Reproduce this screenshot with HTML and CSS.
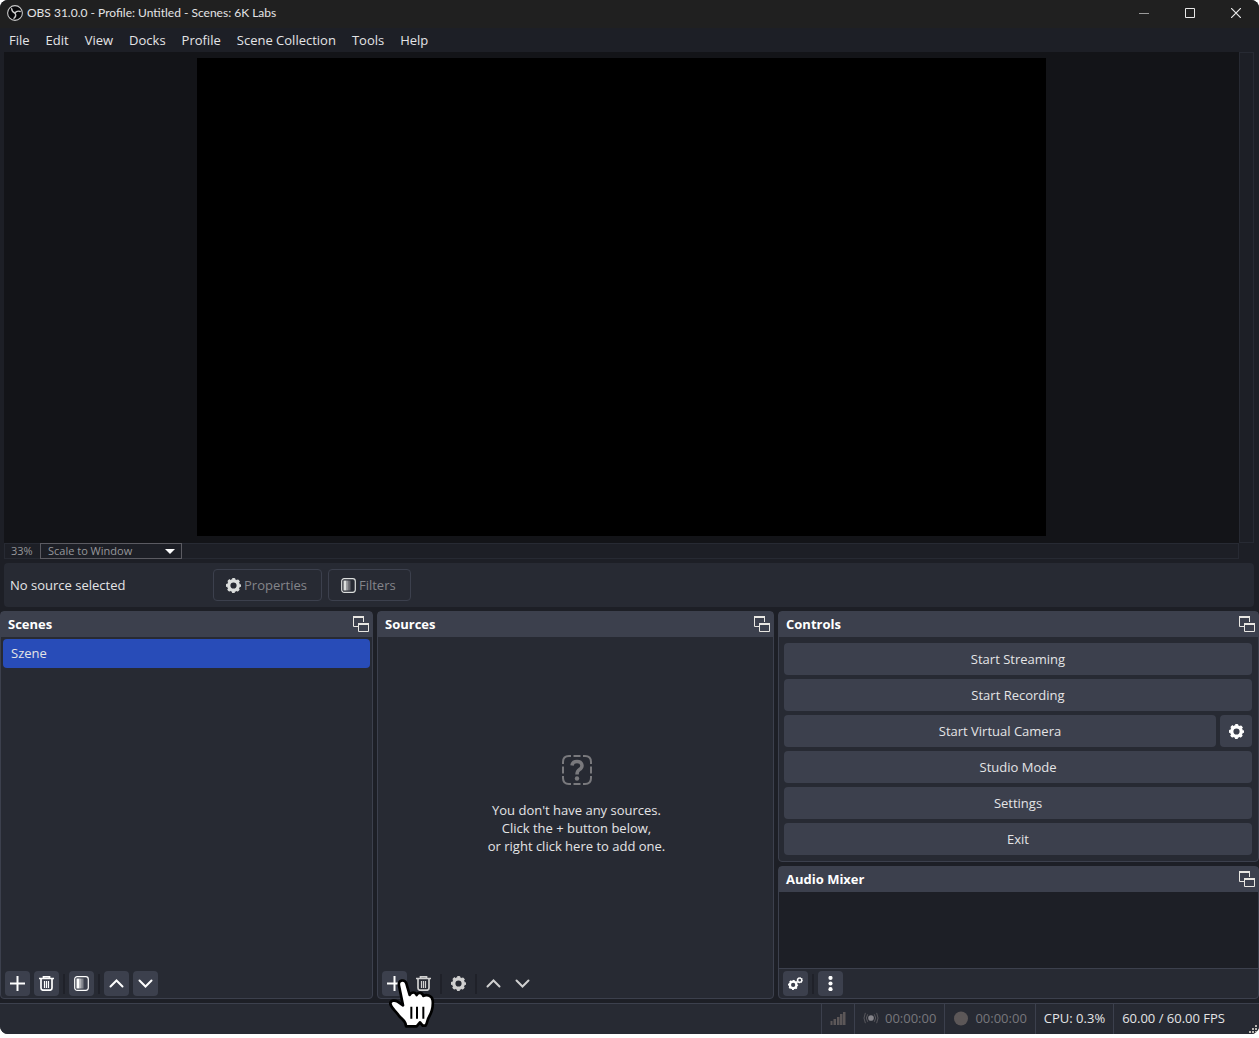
FILE: index.html
```html
<!DOCTYPE html>
<html lang="en">
<head>
<meta charset="utf-8">
<title>OBS 31.0.0 - Profile: Untitled - Scenes: 6K Labs</title>
<link rel="stylesheet" href="styles.css">
</head>
<body>
<svg class="symbols" aria-hidden="true">
  <symbol id="gear" viewBox="0 0 16 16">
    <circle cx="8" cy="8" r="5.100" fill="none" stroke="currentColor" stroke-width="3.600"/>
    <circle cx="8" cy="8" r="7" fill="none" stroke="currentColor" stroke-width="2" stroke-dasharray="3 2.498" stroke-dashoffset="1.500"/>
  </symbol>
  <symbol id="popout" viewBox="0 0 16 16">
    <path d="M5 10.500H.5V.5h10V6" fill="none" stroke="currentColor"/>
    <path d="M0 0h11v2H0z" fill="currentColor"/>
    <path d="M5.500 7.500h10v8h-10z" fill="none" stroke="currentColor"/>
    <path d="M5 7h11v2H5z" fill="currentColor"/>
  </symbol>
  <symbol id="plus" viewBox="0 0 15 15"><path d="M7.500 0v15M0 7.500h15" fill="none" stroke="currentColor" stroke-width="2"/></symbol>
  <symbol id="trash" viewBox="0 0 15 15">
    <path d="M0 2.500h15M4.500 2V.6h6V2M2 3v9q0 2.200 2.200 2.200h6.600Q13 14.200 13 12V3" fill="none" stroke="currentColor" stroke-width="1.700"/>
    <path d="M5.500 5v7M7.500 5v7M9.500 5v7" stroke="currentColor" stroke-width="1.200"/>
  </symbol>
  <symbol id="filter" viewBox="0 0 15 15">
    <rect x=".7" y=".7" width="13.600" height="13.600" rx="2.500" fill="none" stroke="currentColor" stroke-width="1.200"/>
    <path d="M2.500 2.500h3v10h-3z" fill="currentColor"/>
    <path d="M5.500 2.500h2v10h-2z" fill="currentColor" opacity=".6"/>
    <path d="M7.500 2.500h2v10h-2z" fill="currentColor" opacity=".35"/>
  </symbol>
  <symbol id="up" viewBox="0 0 15 15"><path d="M1.500 10.500l6-6 6 6" fill="none" stroke="currentColor" stroke-width="2" stroke-linecap="round"/></symbol>
  <symbol id="down" viewBox="0 0 15 15"><path d="M1.500 4.500l6 6 6-6" fill="none" stroke="currentColor" stroke-width="2" stroke-linecap="round"/></symbol>
</svg>
<div class="window">
  <header class="titlebar">
    <svg class="logo" viewBox="0 0 16 16">
      <circle cx="8" cy="8" r="7.400" fill="#08080a" stroke="#c8c8c8" stroke-width="1.100"/>
      <g fill="none" stroke="#c8c8c8" stroke-width="1.400" stroke-linecap="round">
        <path d="M4.600 3.600Q5 7.200 8 8"/>
        <path d="M13.200 6.500Q9.800 5.300 8 8"/>
        <path d="M7 13.200Q9.800 11 8 8"/>
      </g>
    </svg>
    <h1 class="title">OBS 31.0.0 - Profile: Untitled - Scenes: 6K Labs</h1>
    <button class="winbtn" aria-label="Minimize"><svg viewBox="0 0 10 10"><path d="M0 5.500h10" stroke="#9a9a9a"/></svg></button>
    <button class="winbtn" aria-label="Maximize"><svg viewBox="0 0 10 10"><path d="M.5.5h9v9h-9z" fill="none" stroke="#e8e8e8"/></svg></button>
    <button class="winbtn" aria-label="Close"><svg viewBox="0 0 10 10"><path d="M0 0l10 10M10 0L0 10" stroke="#e8e8e8" stroke-width="1.200"/></svg></button>
  </header>
  <nav class="menu">
    <button>File</button><button>Edit</button><button>View</button><button>Docks</button><button>Profile</button><button>Scene Collection</button><button>Tools</button><button>Help</button>
  </nav>

  <main class="main">
    <section class="preview" aria-label="Preview">
      <div class="stage"><div class="canvas"></div></div>
      <div class="vscroll"></div>
      <div class="scalebar">
        <span class="zoom">33%</span>
        <div class="scale">
          <select aria-label="Preview scaling"><option>Scale to Window</option></select>
          <svg class="caret" viewBox="0 0 10 5"><path d="M0 0h10L5 5z" fill="#fff"/></svg>
        </div>
      </div>
    </section>
    <section class="context">
      <span class="source-name">No source selected</span>
      <button class="tool" disabled><svg><use href="#gear"/></svg>Properties</button>
      <button class="tool" disabled><svg><use href="#filter"/></svg>Filters</button>
    </section>
  </main>

  <div class="docks">
    <section class="dock">
      <div class="dock-head"><h2>Scenes</h2><button aria-label="Float Scenes"><svg><use href="#popout"/></svg></button></div>
      <div class="dock-body"><ul class="list"><li>Szene</li></ul></div>
      <div class="toolbar">
        <button aria-label="Add scene"><svg><use href="#plus"/></svg></button>
        <button aria-label="Remove scene"><svg><use href="#trash"/></svg></button>
        <i></i>
        <button aria-label="Scene filters"><svg><use href="#filter"/></svg></button>
        <i></i>
        <button aria-label="Move scene up"><svg><use href="#up"/></svg></button>
        <button aria-label="Move scene down"><svg><use href="#down"/></svg></button>
      </div>
    </section>

    <section class="dock">
      <div class="dock-head"><h2>Sources</h2><button aria-label="Float Sources"><svg><use href="#popout"/></svg></button></div>
      <div class="dock-body empty">
        <svg class="question" viewBox="0 0 30 30" fill="none" stroke="#79797d" stroke-width="2">
          <path d="M1 9V7q0-6 6-6h2M21 1h2q6 0 6 6v2M29 21v2q0 6-6 6h-2M9 29H7q-6 0-6-6v-2M11.500 1h7M11.500 29h7M1 11.500v7M29 11.500v7"/>
          <path d="M10 10.500q.5-4 5-4t5 4q0 2.500-2.500 4T15 19.500" stroke-width="3.500"/>
          <circle cx="15" cy="23.500" r="2.200" fill="#79797d" stroke="none"/>
        </svg>
        <p>You don't have any sources.<br>Click the + button below,<br>or right click here to add one.</p>
      </div>
      <div class="toolbar flat">
        <button class="hover" aria-label="Add source"><svg><use href="#plus"/></svg>
          <svg class="cursor" viewBox="0 0 210 210">
            <path d="M57 62C53 44 74 42 79 55L89 90C94 80 106 80 110 90C115 80 127 82 130 93C137 88 156 90 158 106C160 124 155 142 147 156C141 165 143 172 137 182H128L120 172L110 184H78C78 166 66 164 56 151C46 136 34 130 31 116C32 105 45 105 53 110L69 121Z" fill="#fff" stroke="#000" stroke-width="8" stroke-linejoin="round"/>
            <path d="M94 125v36M111 125v36M130 125v36" stroke="#000" stroke-width="6"/>
          </svg>
        </button>
        <button aria-label="Remove source"><svg><use href="#trash"/></svg></button>
        <i></i>
        <button aria-label="Source properties"><svg><use href="#gear"/></svg></button>
        <i></i>
        <button aria-label="Move source up"><svg><use href="#up"/></svg></button>
        <button aria-label="Move source down"><svg><use href="#down"/></svg></button>
      </div>
    </section>

    <div class="stack">
      <section class="dock">
        <div class="dock-head"><h2>Controls</h2><button aria-label="Float Controls"><svg><use href="#popout"/></svg></button></div>
        <div class="controls">
          <button>Start Streaming</button>
          <button>Start Recording</button>
          <div class="pair"><button>Start Virtual Camera</button><button class="square" aria-label="Virtual camera settings"><svg><use href="#gear"/></svg></button></div>
          <button>Studio Mode</button>
          <button>Settings</button>
          <button>Exit</button>
        </div>
      </section>
      <section class="dock grow">
        <div class="dock-head"><h2>Audio Mixer</h2><button aria-label="Float Audio Mixer"><svg><use href="#popout"/></svg></button></div>
        <div class="dock-body mixer"></div>
        <div class="toolbar">
          <button aria-label="Advanced audio properties"><svg viewBox="0 0 16 16"><use href="#gear" x="0" y="4" width="11" height="11"/><use href="#gear" x="9" y="1" width="7" height="7"/></svg></button>
          <i></i>
          <button aria-label="Mixer menu"><svg viewBox="0 0 16 16" fill="currentColor"><circle cx="8" cy="2" r="2.200"/><circle cx="8" cy="8" r="2.200"/><circle cx="8" cy="14" r="2.200"/></svg></button>
        </div>
      </section>
    </div>
  </div>

  <footer class="status">
    <div class="cell"><svg viewBox="0 0 15 15" fill="#5c5758"><path d="M0 10h2v4H0zM3 8h2.500v6H3zM6.500 6H9v8H6.500zM9.500 3H12v11H9.500zM12.500 1H15v13h-2.500z"/></svg></div>
    <div class="cell dim"><svg viewBox="0 0 16 16" fill="none" stroke="#5c5b60"><circle cx="8" cy="7.500" r="3" fill="#85848a" stroke="none"/><path d="M4.500 3.500q-3 4 0 8M11.500 3.500q3 4 0 8M2 2q-3 5.500 0 11M14 2q3 5.500 0 11"/></svg>00:00:00</div>
    <div class="cell dim"><svg viewBox="0 0 15 15"><circle cx="7.500" cy="7.500" r="7" fill="#5c5758"/></svg>00:00:00</div>
    <div class="cell">CPU: 0.3%</div>
    <div class="cell fps">60.00 / 60.00 FPS<svg class="grip" viewBox="0 0 9 9" fill="#b8b5b0"><path d="M6 0h2v2H6zM3 3h2v2H3zM6 3h2v2H6zM0 6h2v2H0zM3 6h2v2H3zM6 6h2v2H6z"/></svg></div>
  </footer>
</div>
</body>
</html>
```
FILE: styles.css
```css
* { box-sizing: border-box; }
body {
  margin: 0;
  background: #fff;
  color: #e4e4e6;
  font: 13px/18px "Open Sans", "Noto Sans", sans-serif;
}
button, select { font: inherit; color: inherit; border: 0; padding: 0; margin: 0; background: none; }
h1, h2, p, ul { margin: 0; padding: 0; }
.symbols { display: none; }
.window {
  display: flex;
  flex-direction: column;
  height: calc(100vh - 4px);
  background: #1d1f26;
  border-radius: 8px;
  overflow: hidden;
}

.titlebar { display: flex; flex: none; align-items: center; height: 28px; padding: 0 0 2px 7px; background: #202020; }
.logo { width: 16px; height: 16px; }
.title { flex: 1; margin-left: 4px; font: 400 12px/16px Lato, "Open Sans", sans-serif; }
.winbtn { display: grid; place-items: center; width: 46px; height: 26px; }
.winbtn svg { width: 10px; height: 10px; }

.menu { display: flex; flex: none; height: 24px; gap: 16px; padding: 0 9px 1px; }

.main { display: flex; flex: 1; flex-direction: column; gap: 4px; min-height: 0; padding: 0 5px 4px 4px; }
.preview { display: grid; flex: 1; min-height: 0; grid-template: minmax(0, 1fr) 16px / 1fr 15px; }
.stage { display: flex; justify-content: center; min-height: 0; padding: 6px 0 7px; background: #131418; }
.canvas { height: 100%; aspect-ratio: 16 / 9; background: #000; }
.vscroll { border: 1px solid #272a33; }
.scalebar { display: flex; border: 1px solid #272a33; color: #97979b; font-size: 11px; line-height: 14px; }
.zoom { width: 35px; padding-left: 6px; }
.scale { display: flex; position: relative; width: 142px; margin: -1px 0; border: 1px solid #5b5b62; }
.scale select { flex: 1; appearance: none; padding-left: 7px; }
.caret { position: absolute; right: 6px; top: 5px; width: 10px; height: 5px; }
.context { display: flex; flex: none; align-items: center; gap: 6px; height: 44px; padding: 0 6px; border-radius: 4px; background: #272a33; }
.source-name { width: 197px; }
.tool { display: flex; align-items: center; gap: 3px; height: 32px; padding: 0 14px 0 12px; border: 1px solid #3c404d; border-radius: 4px; color: #84858a; }
.tool svg { width: 15px; height: 15px; color: #dcdedd; }

.docks { display: grid; flex: none; grid-template-columns: 373fr 397fr 481fr; gap: 4px; height: 388px; }
.dock { display: flex; flex-direction: column; min-width: 0; border: 1px solid #3c404d; border-radius: 4px; background: #272a33; }
.stack { display: flex; flex-direction: column; gap: 4px; }
.grow { flex: 1; }
.dock-head { display: flex; align-items: center; justify-content: space-between; height: 25px; padding: 0 3px 2px 7px; background: #3c404d; }
.dock-head h2 { font-size: 13px; font-weight: 700; line-height: 18px; color: #fff; }
.dock-head svg { display: block; width: 16px; height: 16px; color: #e8e6e2; }
.dock-body { flex: 1; min-height: 0; }
.list { list-style: none; padding: 2px; }
.list li { height: 29px; padding: 0 8px; border-radius: 4px; background: #284cb8; line-height: 29px; }
.empty { display: flex; flex-direction: column; align-items: center; justify-content: center; gap: 16px; padding: 4px 0 0 2px; text-align: center; }
.question { width: 30px; height: 30px; }
.toolbar { display: flex; flex: none; align-items: center; gap: 4px; height: 29px; padding: 0 4px; }
.toolbar button { display: grid; place-items: center; position: relative; width: 25px; height: 25px; border-radius: 4px; background: #3c404d; color: #fefefe; }
.toolbar svg { width: 15px; height: 15px; }
.toolbar i { width: 2px; height: 20px; background: #1f2129; }
.flat button { background: none; color: #d0d0d0; }
.flat .hover { background: #3c404d; color: #fefefe; }
.toolbar .cursor { position: absolute; left: -2px; top: -6px; width: 70px; height: 70px; z-index: 1; }
.controls { display: flex; flex-direction: column; gap: 4px; padding: 6px 6px 6px 5px; }
.controls button { flex: 1 0 auto; height: 32px; border-radius: 4px; background: #3c404d; }
.pair { display: flex; gap: 4px; }
.controls .square { display: grid; flex: none; place-items: center; width: 32px; }
.square svg { width: 15px; height: 15px; color: #fff; }
.mixer { border-bottom: 1px solid #3c404d; background: #1d1f26; }

.status { display: flex; flex: none; justify-content: flex-end; height: 31px; margin-top: 4px; border-top: 1px solid #3c404d; background: #272a33; }
.cell { display: flex; align-items: center; gap: 6px; padding: 0 8px 2px; border-left: 1px solid #3c404d; }
.cell svg { width: 16px; height: 15px; }
.fps { position: relative; padding-right: 34px; }
.dim { color: #77777c; }
.fps .grip { position: absolute; right: 1px; bottom: 0; width: 9px; height: 9px; }
```
